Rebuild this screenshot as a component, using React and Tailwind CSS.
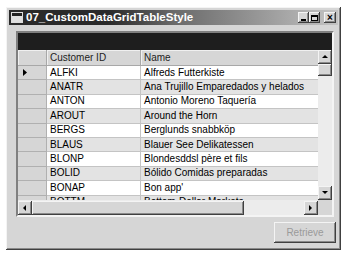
const rows = [
  ["ALFKI", "Alfreds Futterkiste"],
  ["ANATR", "Ana Trujillo Emparedados y helados"],
  ["ANTON", "Antonio Moreno Taquería"],
  ["AROUT", "Around the Horn"],
  ["BERGS", "Berglunds snabbköp"],
  ["BLAUS", "Blauer See Delikatessen"],
  ["BLONP", "Blondesddsl père et fils"],
  ["BOLID", "Bólido Comidas preparadas"],
  ["BONAP", "Bon app'"],
  ["BOTTM", "Bottom-Dollar Markets"],
];

const raised =
  "shadow-[inset_-1px_-1px_#404040,inset_1px_1px_#f4f4f4,inset_-2px_-2px_#8a8a8a]";

function Arrow({ dir }) {
  const pts = {
    up: "1,5 4,2 7,5",
    down: "1,2 4,5 7,2",
    left: "5,1 2,4 5,7",
    right: "2,1 5,4 2,7",
  }[dir];
  return (
    <svg width="8" height="8" viewBox="0 0 8 8">
      <polygon points={pts} fill="#000" />
    </svg>
  );
}

function SBtn({ dir, className = "" }) {
  return (
    <div
      className={`w-[14px] h-[14px] bg-[#d6d6d6] flex items-center justify-center ${raised} ${className}`}
    >
      <Arrow dir={dir} />
    </div>
  );
}

export default function App() {
  return (
    <div
      className="w-[350px] h-[257px] bg-white overflow-hidden pt-[7px] pl-[6px]"
      style={{ fontFamily: '"Liberation Sans", Arial, sans-serif' }}
    >
      <div
        className={`w-[335px] h-[243px] bg-[#d6d6d6] p-[3px] flex flex-col ${raised}`}
      >
        {/* title bar */}
        <div className="h-[15px] flex items-center bg-gradient-to-r from-[#2a2a2a] from-30% via-[#6a6a6a] to-[#c4c4c4] pl-[2px] pr-[2px]">
          <div className="w-[12px] h-[11px] bg-[#9a9a9a] border border-[#ddd] flex flex-col">
            <div className="h-[3px] bg-[#222]" />
            <div className="flex-1 bg-[#e0e0e0]" />
          </div>
          <div className="ml-[3px] text-white font-bold text-[11.5px] leading-none">
            07_CustomDataGridTableStyle
          </div>
          <div className="flex-1" />
          <div className="flex items-center">
            <div className={`w-[11px] h-[11px] bg-[#d6d6d6] flex items-end justify-center pb-[2px] ${raised}`}>
              <div className="w-[5px] h-[2px] bg-black" />
            </div>
            <div className={`w-[11px] h-[11px] bg-[#d6d6d6] flex items-center justify-center ${raised}`}>
              <div className="w-[7px] h-[6px] border border-black border-t-2" />
            </div>
            <div className={`ml-[4px] w-[12px] h-[11px] bg-[#d6d6d6] flex items-center justify-center text-[10px] font-bold leading-none ${raised}`}>
              ×
            </div>
          </div>
        </div>

        {/* client */}
        <div className="flex-1 flex flex-col pl-[7px] pt-[6px]">
          {/* grid */}
          <div className="w-[318px] h-[186px] border-2 border-t-[#808080] border-l-[#808080] border-r-[#f4f4f4] border-b-[#f4f4f4] flex flex-col">
            <div className="h-[17px] bg-[#1e1e1e]" />
            <div className="flex flex-1 min-h-0">
              <div className="w-[300px] h-[150px] overflow-hidden bg-[#d6d6d6] text-[10px] text-black leading-none">
                {/* header */}
                <div className="flex h-[16px] border-b border-[#a8a8a8]">
                  <div className="w-[29px] border-r border-[#a8a8a8] shadow-[inset_1px_1px_#f0f0f0]" />
                  <div className="w-[94px] border-r border-[#a8a8a8] flex items-center pl-[3px] text-[#222] shadow-[inset_1px_1px_#f0f0f0]">
                    Customer ID
                  </div>
                  <div className="flex-1 flex items-center pl-[3px] text-[#222] shadow-[inset_1px_1px_#f0f0f0]">
                    Name
                  </div>
                </div>
                {rows.map(([id, name], i) => (
                  <div key={id} className="flex h-[14.4px]">
                    <div className="w-[29px] shrink-0 border-r border-b border-[#b0b0b0] bg-[#d6d6d6] flex items-center pl-[5px]">
                      {i === 0 && (
                        <svg width="5" height="7" viewBox="0 0 5 7">
                          <polygon points="0,0 4,3.5 0,7" fill="#000" />
                        </svg>
                      )}
                    </div>
                    <div
                      className={`w-[94px] shrink-0 border-r border-b border-[#c4c4c4] flex items-center pl-[3px] ${
                        i % 2 === 0 ? "bg-white" : "bg-[#e3e3e3]"
                      }`}
                    >
                      {id}
                    </div>
                    <div
                      className={`flex-1 border-b border-[#c4c4c4] flex items-center pl-[3px] whitespace-nowrap ${
                        i % 2 === 0 ? "bg-white" : "bg-[#e3e3e3]"
                      }`}
                    >
                      {name}
                    </div>
                  </div>
                ))}
              </div>
              {/* vertical scrollbar */}
              <div className="w-[14px] h-[150px] flex flex-col bg-[#ececec]">
                <SBtn dir="up" />
                <div className={`h-[12px] bg-[#d6d6d6] ${raised}`} />
                <div className="flex-1" />
                <SBtn dir="down" />
              </div>
            </div>
            {/* horizontal scrollbar */}
            <div className="flex h-[15px]">
              <div className="w-[300px] flex bg-[#ececec] pt-[1px]">
                <SBtn dir="left" />
                <div className={`w-[212px] h-[14px] bg-[#d6d6d6] ${raised}`} />
                <div className="flex-1" />
                <SBtn dir="right" />
              </div>
              <div className="w-[14px] bg-[#d6d6d6]" />
            </div>
          </div>

          {/* retrieve button */}
          <div className="flex justify-end pr-[2px] mt-[5px]">
            <div
              className={`w-[62px] h-[21px] bg-[#d6d6d6] flex items-center justify-center text-[10px] text-[#9a9a9a] ${raised}`}
            >
              Retrieve
            </div>
          </div>
        </div>
      </div>
    </div>
  );
}
